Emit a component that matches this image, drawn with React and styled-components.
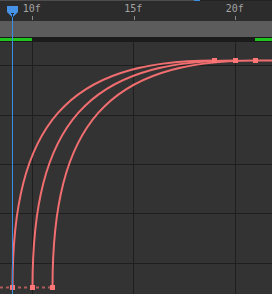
import React from "react";
import styled, { createGlobalStyle } from "styled-components";

const GlobalStyle = createGlobalStyle`
  html, body { margin: 0; padding: 0; background: #333333; }
  body { font-family: "DejaVu Sans Mono", "Liberation Mono", monospace; }
`;

const FRAME0 = 9; // frame at x = 12.5
const FRAME_W = 20.3;
const frameX = (f) => 12.5 + (f - FRAME0) * FRAME_W;

const Editor = styled.div`
  position: relative;
  width: 272px;
  height: 294px;
  overflow: hidden;
  display: flex;
  flex-direction: column;
  background: #333333;
`;

const TopEdge = styled.div`
  height: 1px;
  display: flex;
  background: #232323;
`;

const EdgeSeg = styled.div`
  width: ${(p) => p.$w}px;
  background: ${(p) => p.$c};
`;

const Ruler = styled.div`
  position: relative;
  height: 20px;
  background: #2c2c2c;
`;

const Label = styled.span`
  position: absolute;
  top: 2px;
  font-size: 10px;
  line-height: 12px;
  color: #a3a3a3;
  transform: translateX(-50%);
  white-space: nowrap;
`;

const Tick = styled.div`
  position: absolute;
  top: 15px;
  width: 1px;
  height: 4px;
  background: #8a8a8a;
`;

const RangeBar = styled.div`
  height: 16px;
  background: #5c5c5c;
`;

const Divider = styled.div`
  height: 1px;
  background: #1b1b1b;
`;

const Strip = styled.div`
  height: 3px;
  display: flex;
  background: #1c1c1c;
`;

const StripSeg = styled.div`
  width: ${(p) => p.$w}px;
  flex: ${(p) => (p.$grow ? 1 : "none")};
  background: ${(p) => p.$c};
`;

const Graph = styled.svg`
  display: block;
  flex: 1;
  width: 272px;
`;

const Playhead = styled.svg`
  position: absolute;
  left: 0;
  top: 0;
  width: 272px;
  height: 294px;
  pointer-events: none;
`;

const labels = [10, 15, 20];
const gridX = [32.5, 133.5, 235.5];
const gridY = [65.5, 115.5, 164.5, 213.5, 263.5];

const curves = [
  { x0: 12.5, x3: 214.5 },
  { x0: 32.5, x3: 235.5 },
  { x0: 52.5, x3: 255.5 },
];

const Y0 = 287.5;
const Y1 = 60.5;

function curvePath({ x0, x3 }) {
  const w = x3 - x0;
  const h = Y0 - Y1;
  const p1 = [x0, Y0 - 0.72 * h];
  const p2 = [x0 + 0.27 * w, Y1];
  return `M${x0} ${Y0} C${p1[0]} ${p1[1]} ${p2[0]} ${p2[1]} ${x3} ${Y1}`;
}

const RED = "#f06e70";
const KEY = "#ff7676";

export default function App() {
  return (
    <>
      <GlobalStyle />
      <Editor>
        <TopEdge>
          <EdgeSeg $w={194} $c="#4d4d4d" />
          <EdgeSeg $w={6} $c="#3a8ee6" />
        </TopEdge>
        <Ruler>
          {labels.map((f) => (
            <React.Fragment key={f}>
              <Label style={{ left: frameX(f) - 1 }}>{f}f</Label>
              <Tick style={{ left: Math.floor(frameX(f)) }} />
            </React.Fragment>
          ))}
        </Ruler>
        <RangeBar />
        <Divider />
        <Strip>
          <StripSeg $w={32} $c="#1ec51e" />
          <StripSeg $grow $c="#1c1c1c" />
          <StripSeg $w={17} $c="#1ec51e" />
        </Strip>
        <Divider />
        <Graph viewBox="0 42 272 252" height="252">
          <rect x="0" y="42" width="272" height="252" fill="#333333" />
          {gridX.map((x) => (
            <line key={x} x1={x} y1={37} x2={x} y2={294} stroke="#1e1e1e" strokeWidth="1" />
          ))}
          {gridY.map((y) => (
            <line key={y} x1={0} y1={y} x2={272} y2={y} stroke="#1e1e1e" strokeWidth="1" />
          ))}
          <line x1="0" y1={Y0} x2="52.5" y2={Y0} stroke="#b25a5c" strokeWidth="2" strokeDasharray="3 3" />
          <line x1="255.5" y1={Y1} x2="272" y2={Y1} stroke={RED} strokeWidth="2" />
          {curves.map((c) => (
            <path key={c.x0} d={curvePath(c)} fill="none" stroke={RED} strokeWidth="2" />
          ))}
          {curves.map((c) => (
            <g key={"k" + c.x0} fill={KEY}>
              <rect x={c.x0 - 2.5} y={Y0 - 2.5} width="5" height="5" />
              <rect x={c.x3 - 2.5} y={Y1 - 2.5} width="5" height="5" />
            </g>
          ))}
        </Graph>
        <Playhead viewBox="0 0 272 294">
          <line x1="12.5" y1="16" x2="12.5" y2="294" stroke="#3a8ee6" strokeWidth="1" />
          <path d="M7 6 H18 V12 L12.5 17.5 L7 12 Z" fill="#4592e6" />
          <rect x="11" y="13" width="3" height="1" fill="#1d2b3a" />
          <rect x="12" y="13" width="1" height="4" fill="#1d2b3a" />
        </Playhead>
      </Editor>
    </>
  );
}
